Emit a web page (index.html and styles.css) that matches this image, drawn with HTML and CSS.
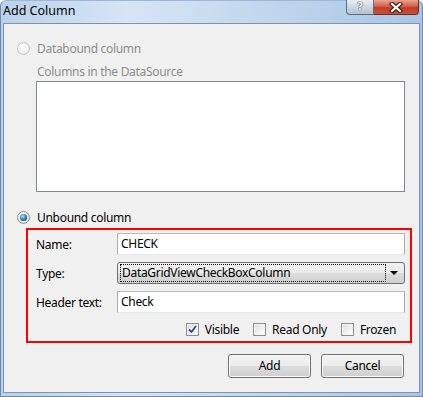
FILE: index.html
```html
<!DOCTYPE html>
<html>
  <head>
    <title>Add Column</title>
    <link rel="stylesheet" href="styles.css">
  </head>
  <body>
    <div class="window">
      <div class="titlebar">
        <span class="title">Add Column</span>
        <div class="caption-buttons">
          <span class="cap-btn help">?</span>
          <span class="cap-btn close">
            <svg width="14" height="11" viewBox="0 0 14 11">
              <path d="M3 2 L11 9 M11 2 L3 9" stroke="#4a1f18" stroke-width="4.5" stroke-linecap="square" />
              <path d="M3 2 L11 9 M11 2 L3 9" stroke="#ffffff" stroke-width="2.2" stroke-linecap="square" />
            </svg>
          </span>
        </div>
      </div>
      <div class="client">
        <div class="radio-row disabled">
          <span class="radio"></span>
          <span>Databound column</span>
        </div>
        <div class="sub-label disabled">Columns in the DataSource</div>
        <div class="listbox"></div>
        <div class="radio-row">
          <span class="radio checked"></span>
          <span>Unbound column</span>
        </div>
        <div class="group">
          <div class="field">
            <span class="field-label">Name:</span>
            <div class="textbox">CHECK</div>
          </div>
          <div class="field">
            <span class="field-label">Type:</span>
            <div class="combo">
              <div class="combo-text">DataGridViewCheckBoxColumn</div>
              <span class="combo-arrow"></span>
            </div>
          </div>
          <div class="field">
            <span class="field-label">Header text:</span>
            <div class="textbox">Check</div>
          </div>
          <div class="checks">
            <div class="check-item">
              <span class="checkbox checked">
                <svg width="9" height="9" viewBox="0 0 9 9">
                  <path d="M1 4.5 L3.5 7 L8 1" stroke="#2b4e8c" stroke-width="1.8" fill="none" />
                </svg>
              </span>
              <span>Visible</span>
            </div>
            <div class="check-item">
              <span class="checkbox"></span>
              <span>Read Only</span>
            </div>
            <div class="check-item">
              <span class="checkbox"></span>
              <span>Frozen</span>
            </div>
          </div>
        </div>
        <div class="buttons">
          <div class="button">Add</div>
          <div class="button">Cancel</div>
        </div>
      </div>
    </div>
  </body>
</html>
```

FILE: styles.css
```css
/* Page */
body {
  margin: 0;
  font-family: "Noto Sans", "Open Sans", sans-serif;
  font-size: 12px;
  letter-spacing: -0.3px;
  color: #000;
}

/* Outer window frame */
.window {
  width: 423px;
  height: 397px;
  box-sizing: border-box;
  background: linear-gradient(to right, #b9d1ea, #d6e5f5 30%, #c3d8ee 60%, #a9c5e4);
  border: 1px solid #6d8bb0;
  border-top-color: #9fb7d4;
  border-radius: 6px 6px 0 0;
}

/* Title bar */
.titlebar {
  height: 22px;
  display: flex;
  justify-content: space-between;
}

.title {
  padding-left: 2px;
  line-height: 20px;
  font-size: 12.5px;
  letter-spacing: 0;
  color: #000;
}

.caption-buttons {
  display: flex;
  margin-right: 3px;
  margin-top: -1px;
  height: 15px;
}

.cap-btn {
  display: flex;
  align-items: center;
  justify-content: center;
  border: 1px solid #5b6f86;
  border-top: none;
  height: 15px;
  box-sizing: border-box;
}

.help {
  width: 28px;
  border-radius: 0 0 0 4px;
  background: linear-gradient(#e9edf2, #cdd6e0 50%, #b3c0cf);
  color: #f4f6f9;
  font-family: "DejaVu Sans", sans-serif;
  font-weight: bold;
  font-size: 11px;
  line-height: 12px;
  text-shadow: 0 0 1px #2d3a4a, 0 0 1px #2d3a4a;
}

.close {
  width: 45px;
  border-left: none;
  border-color: #6a2b22;
  border-radius: 0 0 4px 0;
  background: linear-gradient(#e9a391, #d4614a 45%, #c33b25 55%, #c9523a);
}

/* Client area */
.client {
  margin: 0 2px;
  height: 370px;
  box-sizing: border-box;
  border: 1px solid #7f93ad;
  background: #f0f0f0;
  padding: 16px 14px 0 13px;
}

.radio-row {
  display: flex;
  align-items: center;
  height: 16px;
  gap: 7px;
}

.listbox + .radio-row {
  margin-top: 17px;
}

.disabled {
  color: #8d8d8d;
}

.radio {
  width: 11px;
  height: 11px;
  border: 1px solid #8e8f8f;
  border-radius: 50%;
  background: radial-gradient(circle at 40% 35%, #ffffff, #dcdcdc);
  position: relative;
}

.disabled .radio {
  border-color: #c4c4c4;
  background: radial-gradient(circle at 40% 35%, #ffffff, #e6e6e6);
}

.radio.checked::after {
  content: "";
  position: absolute;
  left: 2px;
  top: 2px;
  width: 7px;
  height: 7px;
  border-radius: 50%;
  background: radial-gradient(circle at 40% 35%, #a8e6ff, #1d74b0 55%, #0a3a63);
}

.sub-label {
  margin-top: 8px;
  margin-left: 20px;
  height: 16px;
  line-height: 16px;
}

.listbox {
  margin-top: 1px;
  margin-left: 19px;
  height: 111px;
  box-sizing: border-box;
  border: 1px solid #828790;
  background: #fff;
}

/* Red highlight around the unbound fields */
.group {
  margin-top: 3px;
  margin-left: 9px;
  margin-right: -7px;
  height: 115px;
  box-sizing: border-box;
  border: 2px solid #ff0000;
  padding: 3px 5px 4px 8px;
  display: flex;
  flex-direction: column;
  gap: 7px;
}

.field {
  display: flex;
  align-items: center;
  height: 22px;
}

.field-label {
  width: 81px;
}

.textbox {
  flex: 1;
  height: 22px;
  box-sizing: border-box;
  border: 1px solid #abadb3;
  border-top-color: #b8bcc4;
  border-bottom-color: #e3e9ef;
  background: #fff;
  padding-left: 3px;
  line-height: 20px;
}

.combo {
  flex: 1;
  height: 22px;
  box-sizing: border-box;
  border: 1px solid #707070;
  border-radius: 3px;
  background: linear-gradient(#f2f2f2, #ebebeb 50%, #dddddd 50%, #cfcfcf);
  display: flex;
  align-items: center;
  padding: 2px;
}

.combo-text {
  flex: 1;
  height: 16px;
  line-height: 15px;
  border: 1px dotted #000;
  padding-left: 1px;
  margin-right: 4px;
}

.combo-arrow {
  width: 0;
  height: 0;
  border-left: 4px solid transparent;
  border-right: 4px solid transparent;
  border-top: 4px solid #000;
  margin-right: 4px;
}

.checks {
  margin-top: 1px;
  height: 16px;
  display: flex;
  justify-content: flex-end;
  gap: 14px;
  padding-right: 9px;
}

.check-item {
  display: flex;
  align-items: center;
  gap: 6px;
}

.checkbox {
  width: 11px;
  height: 11px;
  border: 1px solid #8e8f8f;
  background: linear-gradient(135deg, #dcdcdc, #ffffff);
  display: flex;
  align-items: center;
  justify-content: center;
  box-shadow: inset 0 0 0 1px #f4f4f4;
}

/* Dialog buttons */
.buttons {
  margin-top: 11px;
  display: flex;
  justify-content: flex-end;
  gap: 10px;
  margin-right: 1px;
}

.button {
  width: 83px;
  height: 24px;
  box-sizing: border-box;
  border: 1px solid #707070;
  border-radius: 3px;
  background: linear-gradient(#f2f2f2, #ebebeb 50%, #dddddd 50%, #cfcfcf);
  box-shadow: inset 0 0 0 1px #fcfcfc;
  text-align: center;
  line-height: 22px;
}
```
